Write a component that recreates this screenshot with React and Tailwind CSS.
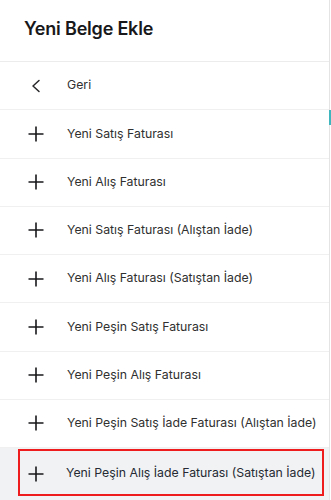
const items = [
  'Yeni Satış Faturası',
  'Yeni Alış Faturası',
  'Yeni Satış Faturası (Alıştan İade)',
  'Yeni Alış Faturası (Satıştan İade)',
  'Yeni Peşin Satış Faturası',
  'Yeni Peşin Alış Faturası',
  'Yeni Peşin Satış İade Faturası (Alıştan İade)',
  'Yeni Peşin Alış İade Faturası (Satıştan İade)',
];

function PlusIcon() {
  return (
    <svg width="16" height="16" viewBox="0 0 16 16" fill="none" stroke="currentColor" strokeWidth="1.6">
      <path d="M8 0.5v15M0.5 8h15" />
    </svg>
  );
}

function ChevronIcon() {
  return (
    <svg width="16" height="16" viewBox="0 0 16 16" fill="none" stroke="currentColor" strokeWidth="1.5" strokeLinecap="round" strokeLinejoin="round">
      <path d="M11 2.5L5 8l6 5.5" />
    </svg>
  );
}

export default function App() {
  const last = items.length - 1;
  return (
    <div className="w-[331px] h-[500px] overflow-hidden bg-white font-['Inter',sans-serif]">
      <div className="w-[330px] h-full border-r border-[#e4e4e4] relative">
        <div className="absolute right-[-2px] top-[110px] w-[2px] h-[15px] bg-[#3fb5bd]" />
        <div className="h-[62px] flex items-center pl-6 border-b border-[#ececec]">
          <h1 className="text-[18px] font-semibold text-[#18181b] tracking-[-0.2px] -mt-[5px]">Yeni Belge Ekle</h1>
        </div>
        <div className="h-[48.25px] flex items-center pl-[28px] border-b border-[#f0f0f0] text-[#27272a]">
          <ChevronIcon />
          <span className="ml-[23px] text-[12.3px] text-[#303030]">Geri</span>
        </div>
        {items.map((t, i) =>
          i === last ? (
            <div key={t} className="h-[52px] bg-[#f1f2f4] pl-[18px] pr-[5px] pt-[1px]">
              <div className="h-[47px] flex items-center pl-[8px] pt-[2px] border-2 border-[#ee1c1c]">
                <span className="text-[#18181b]"><PlusIcon /></span>
                <span className="ml-[22px] text-[12.3px] text-[#252a33] whitespace-nowrap">{t}</span>
              </div>
            </div>
          ) : (
            <div key={t} className="h-[48.25px] flex items-center pl-[28px] border-b border-[#f0f0f0]">
              <span className="text-[#18181b]"><PlusIcon /></span>
              <span className="ml-[23px] text-[12.3px] text-[#303030] whitespace-nowrap">{t}</span>
            </div>
          )
        )}
      </div>
    </div>
  );
}
